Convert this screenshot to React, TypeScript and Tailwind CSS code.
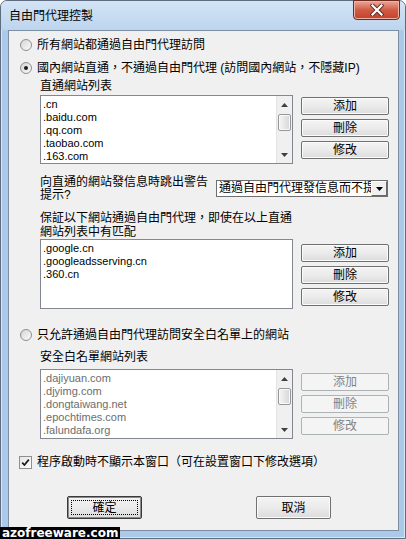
import React from "react";

const font = "font-['Liberation_Sans','Noto_Sans_CJK_TC',sans-serif]";

function Radio({ checked }: { checked?: boolean }) {
  return (
    <div className="w-[12px] h-[12px] rounded-full border border-[#8e8f8f] bg-linear-to-br from-[#d4d4d4] to-[#fcfcfc] flex items-center justify-center">
      {checked && <div className="w-[4px] h-[4px] rounded-full bg-[#1b1b1b]" />}
    </div>
  );
}

function Btn({ children, disabled, className = "" }: any) {
  return (
    <div
      className={`h-[18px] flex items-center justify-center rounded-[2px] border text-[12px] leading-none ${
        disabled
          ? "border-[#adb2b5] bg-[#f4f4f4] text-[#838383]"
          : "border-[#707070] bg-linear-to-b from-[#f4f4f4] via-[#ebebeb] to-[#dcdcdc] text-black shadow-[inset_0_0_0_1px_#fbfbfb]"
      } ${className}`}
    >
      {children}
    </div>
  );
}

function ScrollBar() {
  return (
    <div className="w-[16px] h-full flex flex-col bg-[#f0f0f0] border-l border-[#e3e3e3]">
      <div className="h-[17px] flex items-center justify-center">
        <svg width="7" height="4" viewBox="0 0 7 4">
          <path d="M3.5 0L7 4H0z" fill="#3f3f3f" />
        </svg>
      </div>
      <div className="flex-1 px-[1px] pt-[1px]">
        <div className="h-[17px] rounded-[2px] border border-[#979797] bg-linear-to-r from-[#f6f6f6] to-[#d6d6d6] shadow-[inset_0_0_0_1px_#fafafa]" />
      </div>
      <div className="h-[17px] flex items-center justify-center">
        <svg width="7" height="4" viewBox="0 0 7 4">
          <path d="M0 0H7L3.5 4z" fill="#3f3f3f" />
        </svg>
      </div>
    </div>
  );
}

function ListBox({ items, disabled, scroll, h }: any) {
  return (
    <div className={`w-[253px] ${h} bg-white border border-[#828790] flex`}>
      <div
        className={`flex-1 pl-[2px] pt-[2px] text-[11px] leading-[13px] overflow-hidden ${
          disabled ? "text-[#6d6d6d]" : "text-black"
        }`}
      >
        {items.map((i: string) => (
          <div key={i}>{i}</div>
        ))}
      </div>
      {scroll && <ScrollBar />}
    </div>
  );
}

function ListRow({ items, disabled, scroll, h, pt }: any) {
  return (
    <div className="flex ml-[31px] gap-[8px]">
      <ListBox items={items} disabled={disabled} scroll={scroll} h={h} />
      <div className={`w-[88px] flex flex-col gap-[4px] ${pt}`}>
        <Btn disabled={disabled}>添加</Btn>
        <Btn disabled={disabled}>刪除</Btn>
        <Btn disabled={disabled}>修改</Btn>
      </div>
    </div>
  );
}

export default function App() {
  return (
    <div className={`${font} text-[12px] text-black`}>
      <div className="relative w-[406px] h-[539px] bg-[#abc9e8] border border-[#5d6c7e] rounded-t-[7px] shadow-[inset_0_0_0_1px_#d8e7f6] flex flex-col">
        {/* title bar */}
        <div className="h-[29px] flex items-center pl-[8px] rounded-t-[6px] bg-linear-to-b from-[#d3e4f5] to-[#bdd5ee]">
          自由門代理控製
        </div>
        <div className="absolute top-[-1px] right-[5px] w-[47px] h-[20px] rounded-b-[4px] border border-[#6d2b22] bg-linear-to-b from-[#e9a89a] via-[#d15a43] to-[#c2412b] shadow-[inset_0_0_0_1px_#eeb1a4] flex items-center justify-center">
          <svg width="14" height="12" viewBox="0 0 14 12">
            <path d="M2.5 1.5L11.5 10.5M11.5 1.5L2.5 10.5" stroke="#5a2a24" strokeWidth="4" strokeLinecap="square" />
            <path d="M2.5 1.5L11.5 10.5M11.5 1.5L2.5 10.5" stroke="#ffffff" strokeWidth="2.2" strokeLinecap="square" />
          </svg>
        </div>

        {/* client area */}
        <div className="ml-[7px] mr-[6px] h-[501px] border border-[#7d8ea3] bg-[#f0f0f0] flex flex-col">
          <div className="flex items-center gap-[5px] ml-[11px] mt-[6px] h-[16px] leading-[16px]">
            <Radio />
            <span>所有網站都通過自由門代理訪問</span>
          </div>
          <div className="flex items-center gap-[5px] ml-[11px] mt-[7px] h-[16px] leading-[16px]">
            <Radio checked />
            <span>國內網站直通，不通過自由門代理 (訪問國內網站，不隱藏IP)</span>
          </div>
          <div className="ml-[31px] mt-[3px] h-[14px] leading-[14px]">直通網站列表</div>
          <div className="mt-[2px]">
            <ListRow
              items={[".cn", ".baidu.com", ".qq.com", ".taobao.com", ".163.com"]}
              scroll
              h="h-[69px]"
              pt="pt-[2px]"
            />
          </div>

          <div className="flex ml-[31px] mt-[12px]">
            <div className="w-[176px] leading-[13px]">
              向直通的網站發信息時跳出警告
              <br />
              提示?
            </div>
            <div className="w-[172px] h-[17px] mt-[4px] bg-white border border-[#6f6f6f] flex items-center">
              <div className="flex-1 overflow-hidden whitespace-nowrap pl-[2px] leading-[15px]">
                通過自由門代理發信息而不提示
              </div>
              <div className="w-[16px] h-[15px] bg-[#f0f0f0] border-l border-t border-[#ffffff] border-r border-b border-r-[#696969] border-b-[#696969] flex items-center justify-center">
                <svg width="7" height="4" viewBox="0 0 7 4">
                  <path d="M0 0H7L3.5 4z" fill="#000000" />
                </svg>
              </div>
            </div>
          </div>

          <div className="ml-[31px] mt-[9px] leading-[14px]">
            保証以下網站通過自由門代理，即使在以上直通
            <br />
            網站列表中有匹配
          </div>
          <ListRow
            items={[".google.cn", ".googleadsserving.cn", ".360.cn"]}
            h="h-[70px]"
            pt="pt-[5px]"
          />

          <div className="flex items-center gap-[5px] ml-[11px] mt-[18px] h-[16px] leading-[16px]">
            <Radio />
            <span>只允許通過自由門代理訪問安全白名單上的網站</span>
          </div>
          <div className="ml-[31px] mt-[7px] h-[14px] leading-[14px]">安全白名單網站列表</div>
          <div className="mt-[5px]">
            <ListRow
              items={[".dajiyuan.com", ".djyimg.com", ".dongtaiwang.net", ".epochtimes.com", ".falundafa.org"]}
              scroll
              disabled
              h="h-[70px]"
              pt="pt-[4px]"
            />
          </div>

          <div className="flex items-center gap-[5px] ml-[10px] mt-[15px] h-[16px] leading-[16px]">
            <div className="w-[13px] h-[13px] border border-[#8e8f8f] bg-linear-to-br from-[#e4e4e4] to-white flex items-center justify-center">
              <svg width="9" height="9" viewBox="0 0 9 9">
                <path d="M1.2 4.6L3.4 7L7.8 1.6" stroke="#1a1a1a" strokeWidth="1.7" fill="none" />
              </svg>
            </div>
            <span>程序啟動時不顯示本窗口（可在設置窗口下修改選項）</span>
          </div>

          <div className="flex ml-[58px] mt-[26px] gap-[114px]">
            <div className="relative w-[75px] h-[23px] border border-[#3a3a3a] rounded-[2px] bg-linear-to-b from-[#f4f4f4] via-[#ebebeb] to-[#dcdcdc] shadow-[inset_0_0_0_1px_#8a8a8a] flex items-center justify-center">
              <div className="absolute inset-[3px] border border-dotted border-black" />
              確定
            </div>
            <div className="w-[75px] h-[23px] border border-[#707070] rounded-[2px] bg-linear-to-b from-[#f4f4f4] via-[#ebebeb] to-[#dcdcdc] shadow-[inset_0_0_0_1px_#fbfbfb] flex items-center justify-center">
              取消
            </div>
          </div>
        </div>

        <div className="absolute left-[-1px] bottom-[-1px] w-[120px] h-[12px] bg-black text-white font-['DejaVu_Sans',sans-serif] font-bold text-[12px] leading-[12px] pl-[2px] whitespace-nowrap overflow-hidden">
          azofreeware.com
        </div>
      </div>
    </div>
  );
}
